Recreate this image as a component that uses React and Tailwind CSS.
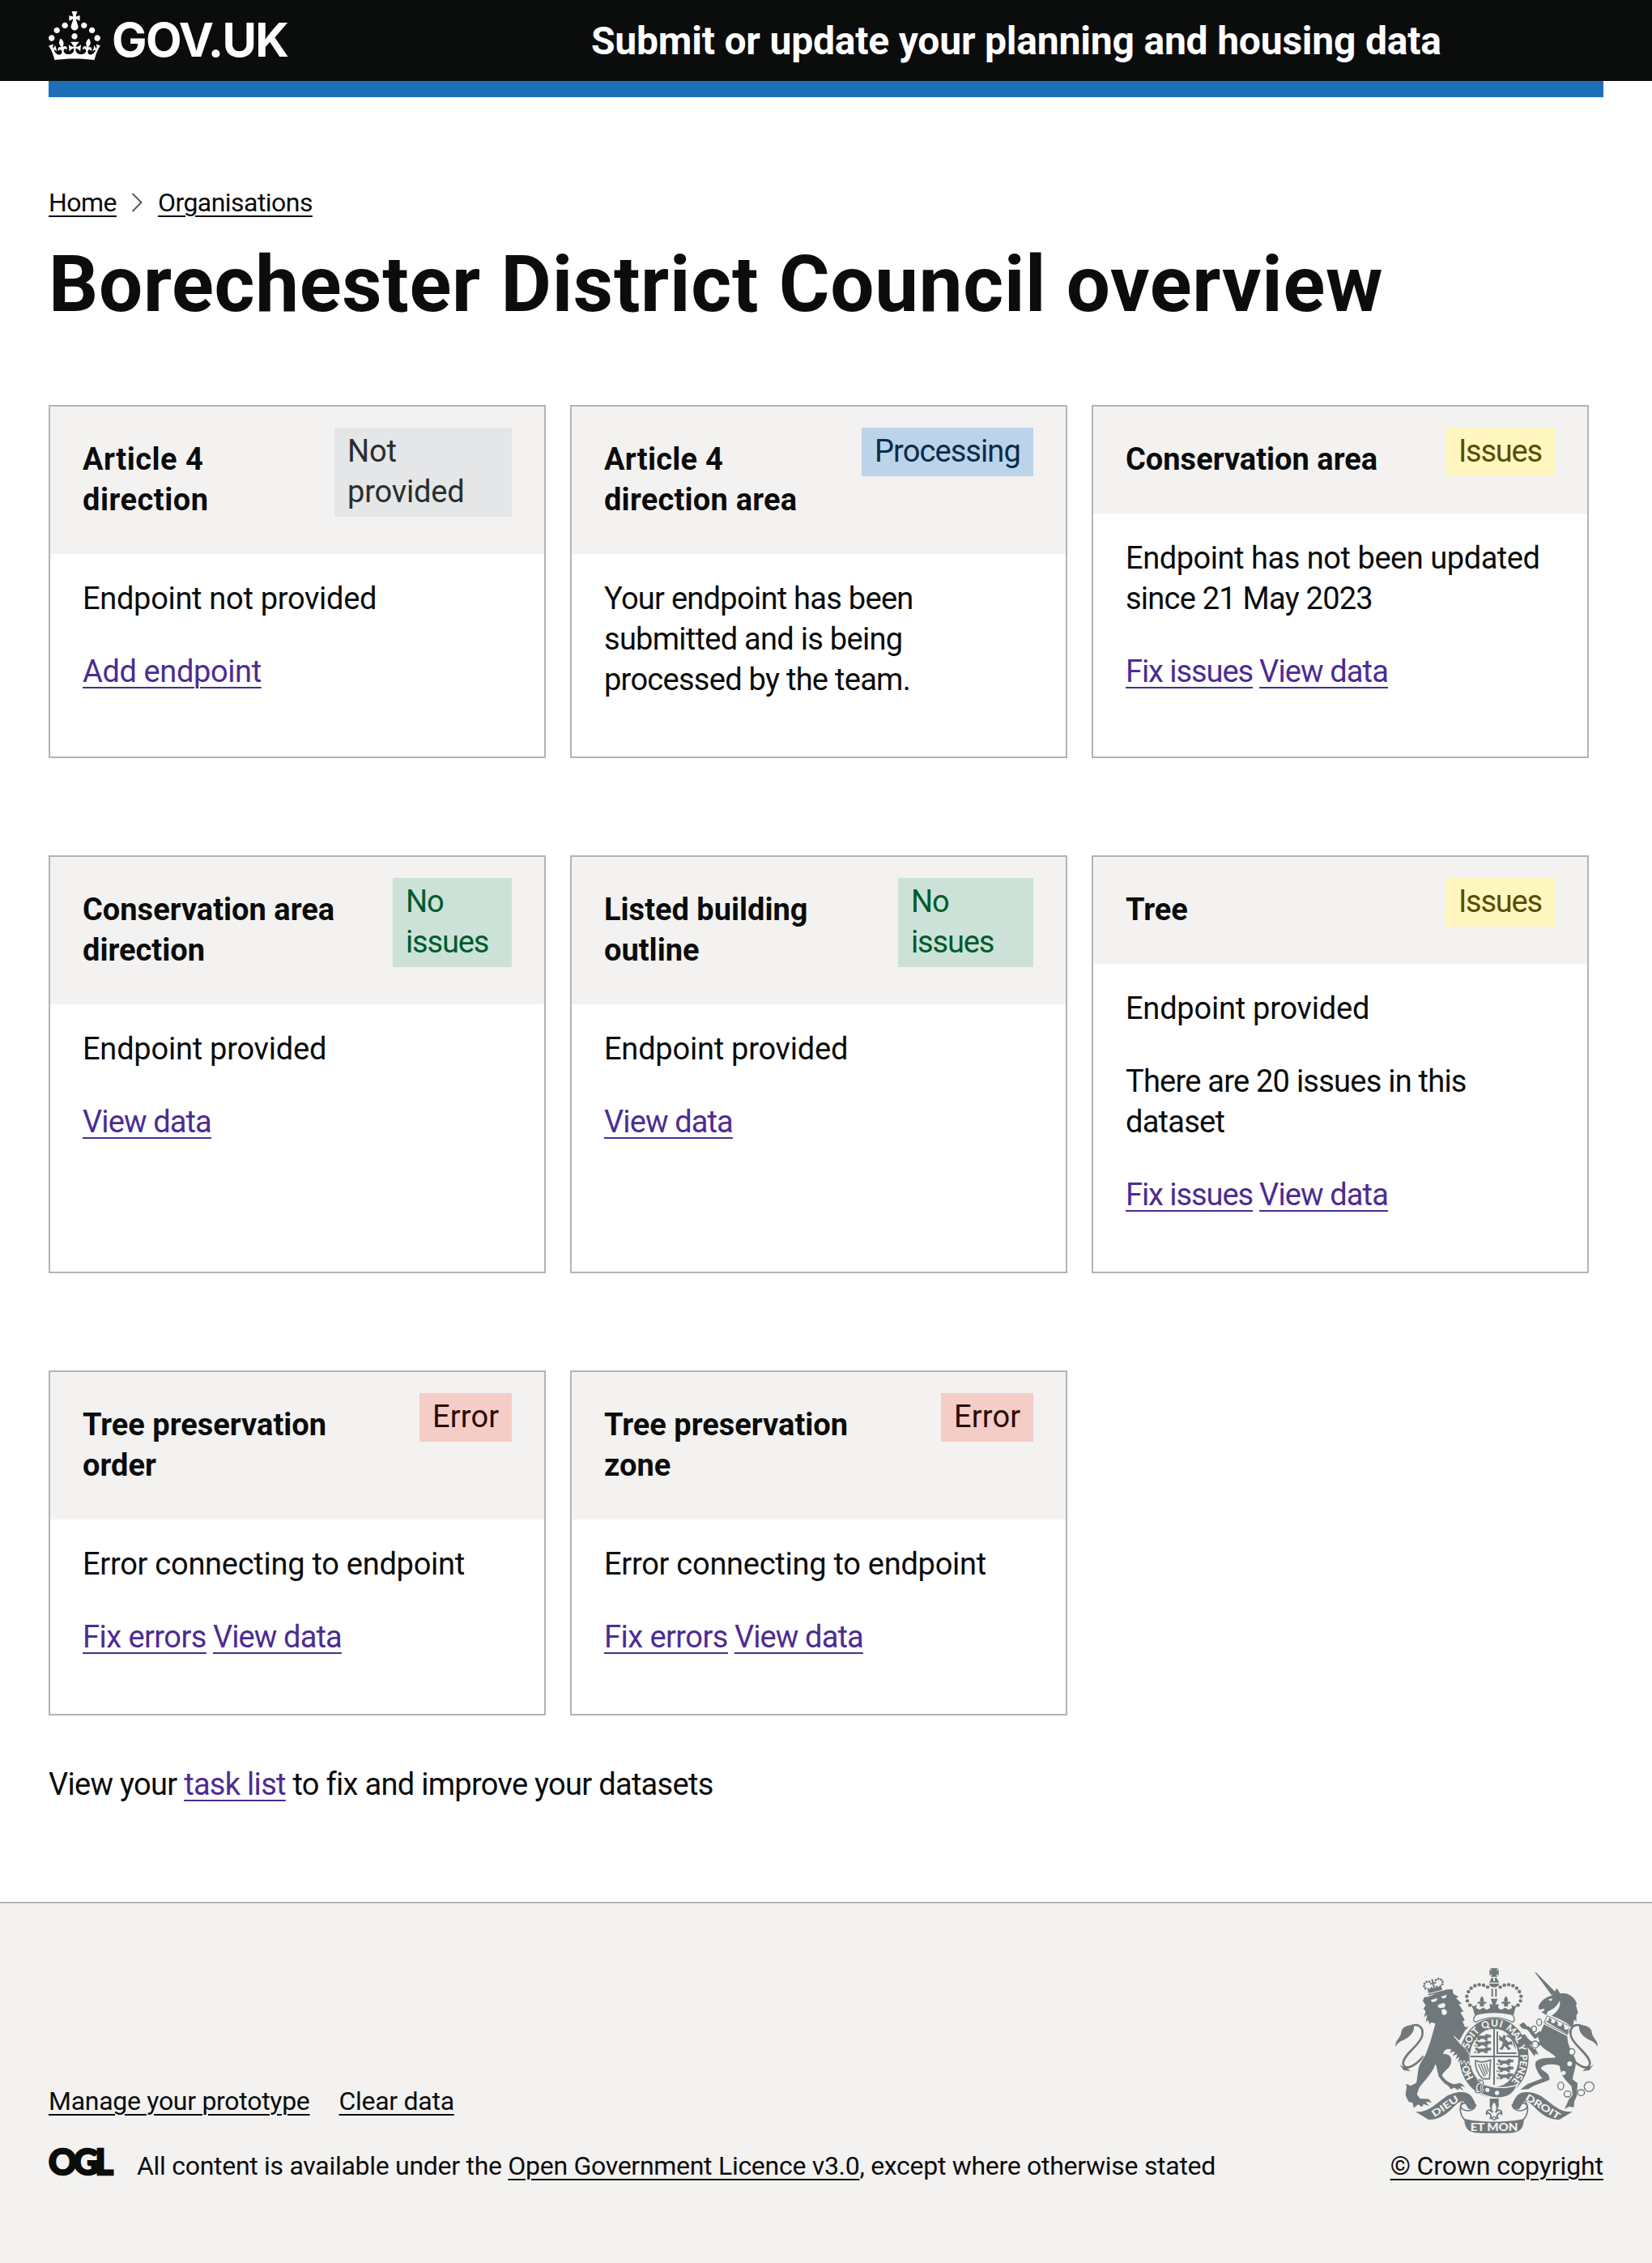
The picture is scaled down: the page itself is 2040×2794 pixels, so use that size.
import React from "react";

const LINK = "underline decoration-2 underline-offset-[6px] text-[#4c2c92]";
const SMALL_LINK = "underline decoration-2 underline-offset-[5px] whitespace-nowrap";

const TAGS = {
  grey: "bg-[#e5e6e7] text-[#282d30]",
  blue: "bg-[#bbd4ea] text-[#0c2d4a]",
  yellow: "bg-[#fff7bf] text-[#594d00]",
  green: "bg-[#cce2d8] text-[#005a30]",
  red: "bg-[#f4cdc6] text-[#2a0b06]",
};

const TRACKING = {
  "Endpoint not provided": "tracking-[-0.008em]",
  "Your endpoint has been\nsubmitted and is being\nprocessed by the team.": "tracking-[-0.019em]",
  "Endpoint has not been updated": "tracking-[-0.012em]",
  "since 21 May 2023": "tracking-[-0.020em]",
  "Endpoint provided": "tracking-[-0.006em]",
  "There are 20 issues in this\ndataset": "tracking-[-0.020em]",
  "Error connecting to endpoint": "tracking-[-0.007em]",
  "Add endpoint": "tracking-[-0.010em]",
  "View data": "tracking-[-0.023em]",
  "Fix issues": "tracking-[-0.028em]",
  "Fix errors": "tracking-[-0.014em]",
  "Article 4\ndirection": "tracking-[0.013em]",
  "Article 4\ndirection area": "tracking-[0.006em]",
  "Not\nprovided": "tracking-[-0.005em]",
  "No\nissues": "tracking-[-0.030em]",
  Issues: "tracking-[-0.033em]",
  Processing: "tracking-[-0.024em]",
  Error: "tracking-[0.004em]",
};

const CARDS = [
  { title: "Article 4\ndirection", tag: "Not\nprovided", tone: "grey", tagWidth: "w-[219px]", body: ["Endpoint not provided"], links: ["Add endpoint"] },
  { title: "Article 4\ndirection area", tag: "Processing", tone: "blue", tagWidth: "w-[212px]", body: ["Your endpoint has been\nsubmitted and is being\nprocessed by the team."], links: [] },
  { title: "Conservation area", tag: "Issues", tone: "yellow", tagWidth: "w-[135px]", body: [["Endpoint has not been updated", "since 21 May 2023"]], links: ["Fix issues", "View data"] },
  { title: "Conservation area\ndirection", tag: "No\nissues", tone: "green", tagWidth: "w-[147px]", body: ["Endpoint provided"], links: ["View data"] },
  { title: "Listed building\noutline", tag: "No\nissues", tone: "green", tagWidth: "w-[167px]", body: ["Endpoint provided"], links: ["View data"] },
  { title: "Tree", tag: "Issues", tone: "yellow", tagWidth: "w-[135px]", body: ["Endpoint provided", "There are 20 issues in this\ndataset"], links: ["Fix issues", "View data"] },
  { title: "Tree preservation\norder", tag: "Error", tone: "red", tagWidth: "w-[114px]", body: ["Error connecting to endpoint"], links: ["Fix errors", "View data"] },
  { title: "Tree preservation\nzone", tag: "Error", tone: "red", tagWidth: "w-[114px]", body: ["Error connecting to endpoint"], links: ["Fix errors", "View data"] },
];

function Crown() {
  return (
    <svg viewBox="0 0 32 30" className="h-[60px] w-16 shrink-0" fill="currentColor" aria-hidden="true">
      <path d="M22.6 10.4c-1 .4-2-.1-2.4-1-.4-.9.1-2 1-2.4.9-.4 2 .1 2.4 1s-.1 2-1 2.4m-5.9 6.7c-.9.4-2-.1-2.4-1-.4-.9.1-2 1-2.4.9-.4 2 .1 2.4 1s-.1 2-1 2.4m10.8-3.7c-1 .4-2-.1-2.4-1-.4-.9.1-2 1-2.4.9-.4 2 .1 2.4 1s0 2-1 2.4m3.3 4.8c-1 .4-2-.1-2.4-1-.4-.9.1-2 1-2.4.9-.4 2 .1 2.4 1s-.1 2-1 2.4M17 4.7l2.3 1.2V2.5l-2.3.7-.2-.2.9-3h-3.4l.9 3-.2.2c-.1.1-2.3-.7-2.3-.7v3.4L15 4.7c.1.1.1.2.2.2l-1.3 4c-.1.2-.1.4-.1.6 0 1.1.8 2 1.9 2.2h.7c1-.2 1.9-1.1 1.9-2.1 0-.2 0-.4-.1-.6l-1.3-4c-.1-.2 0-.2.1-.3m-7.6 5.7c.9.4 2-.1 2.4-1 .4-.9-.1-2-1-2.4-.9-.4-2 .1-2.4 1s0 2 1 2.4m-5 3c.9.4 2-.1 2.4-1 .4-.9-.1-2-1-2.4-.9-.4-2 .1-2.4 1s.1 2 1 2.4m-3.2 4.8c.9.4 2-.1 2.4-1 .4-.9-.1-2-1-2.4-.9-.4-2 .1-2.4 1s0 2 1 2.4m14.8 11c4.4 0 8.6.3 12.3.8 1.1-4.5 2.4-7 3.7-8.8l-2.5-.9c.2 1.3.3 1.9 0 2.7-.4-.4-.8-1.1-1.1-2.3l-1.2 4c.7-.5 1.3-.8 2-.9-1.1 2.5-2.6 3.1-3.5 3-1.1-.2-1.7-1.2-1.5-2.1.3-1.2 1.5-1.5 2.1-.1 1.1-2.3-.8-3-2-2.3 1.9-1.9 2.1-3.5.6-5.6-2.1 1.6-2.1 3.2-1.2 5.5-1.2-1.4-3.2-.6-2.5 1.6.9-1.4 2.1-.5 1.9.8-.2 1.1-1.7 2.1-3.5 1.9-2.7-.2-2.9-2.1-2.9-3.6.7-.1 1.9.5 2.9 1.9l.4-4.3c-1.1 1.1-2.1 1.4-3.2 1.4.4-1.2 2.1-3 2.1-3h-5.4s1.7 1.9 2.1 3c-1.1 0-2.1-.2-3.2-1.4l.4 4.3c1-1.4 2.2-2 2.9-1.9-.1 1.5-.2 3.4-2.9 3.6-1.9.2-3.4-.8-3.5-1.9-.2-1.3 1-2.2 1.9-.8.7-2.3-1.2-3-2.5-1.6.9-2.2.9-3.9-1.2-5.5-1.5 2-1.3 3.7.6 5.6-1.2-.7-3.1 0-2 2.3.6-1.4 1.8-1.1 2.1.1.2.9-.3 1.9-1.5 2.1-.9.2-2.4-.5-3.5-3 .6 0 1.2.3 2 .9l-1.2-4c-.3 1.1-.7 1.9-1.1 2.3-.3-.8-.2-1.4 0-2.7l-2.9.9C1.3 23 2.6 25.5 3.7 30c3.7-.5 7.9-.8 12.3-.8" />
    </svg>
  );
}

const PEARLS = [[303, 167], [294, 151], [292, 134], [298, 117], [308, 104], [322, 95], [338, 91], [354, 93], [369, 100]];
const LIGHT = "#f3f2f1";

function Fleur({ x, y, s = 1 }) {
  return (
    <g transform={`translate(${x} ${y}) scale(${s})`}>
      <path d="M0 -20C9 -9 8 -2 3 5C8 -3 17 -1 16 8C13 5 9 6 6 12L8 17H-8L-6 12C-9 6 -13 5 -16 8C-17 -1 -8 -3 -3 5C-8 -2 -9 -9 0 -20Z" />
    </g>
  );
}

function Passant({ x, y }) {
  return (
    <path
      transform={`translate(${x} ${y})`}
      stroke="currentColor"
      strokeWidth="2"
      d="M-28 -7L-22 -10L-16 -5H6L12 -11L24 -9L26 -3L20 2L14 4L18 10H9L4 5H-8L-11 10H-21L-17 4L-24 0ZM22 -4L30 -10L29 1ZM-29 4L-24 9H-31Z"
    />
  );
}

function Ribbon() {
  return (
    <>
      <path d="M102 562C150 564 172 536 210 509C240 488 285 482 305 500C315 511 321 522 325 536L320 550L300 553C290 540 288 530 277 522C258 522 240 552 214 570C196 582 176 592 150 591Z" />
      <path d="M276 524C262 545 266 572 284 592M325 534C325 552 300 566 276 552C262 542 272 528 290 530" fill="none" stroke="currentColor" strokeWidth="5" />
    </>
  );
}

function Tail() {
  return (
    <>
      <path d="M28 322C24 298 48 288 49 266C52 248 76 238 96 243C98 262 88 278 68 290C50 300 34 304 28 322Z" />
      <path d="M84 245C112 232 134 248 126 282C116 318 58 348 56 382C58 408 92 402 132 356" fill="none" stroke="currentColor" strokeWidth="8" />
      <path d="M42 386L56 396L68 394L88 398L72 402L84 412L58 408Z" />
    </>
  );
}

function RoyalArms() {
  return (
    <svg viewBox="27 30 750 612" className="h-[204px] w-[250px] text-[#70787b]" fill="currentColor" aria-hidden="true">
      {/* imperial crown */}
      <path d="M379 30H407L400 41L410 34V58L400 51L405 62H381L386 51L376 58V34L386 41ZM375 83L384 66H390V78H396V66H402L412 83ZM374 87H412C410 96 403 101 393 101C383 101 376 96 374 87Z" />
      <path d="M383 106H389V136H383ZM397 106H403V136H397Z" />
      {PEARLS.map(([x, y]) => (
        <g key={`${x}-${y}`}>
          <circle cx={x} cy={y} r="6.6" />
          <circle cx={785 - x} cy={y} r="6.6" />
        </g>
      ))}
      <path d="M305 158L316 172L330 166L326 178L340 184L352 176L366 184L378 178L376 162L388 166L380 143H406L398 166L410 162L408 178L420 184L434 176L446 184L460 178L456 166L470 172L481 158L470 184L466 203C420 193 365 193 321 203L316 184Z" />
      <Fleur x={348} y={154} s={1.05} />
      <Fleur x={437} y={154} s={1.05} />
      <path d="M334 200C372 192 414 192 452 200C470 204 472 226 462 230C420 208 366 208 324 230C312 222 318 204 334 200Z" fill={LIGHT} stroke="currentColor" strokeWidth="4" />

      {/* garter and shield */}
      <ellipse cx="393" cy="362" rx="109" ry="127" fill="none" stroke="currentColor" strokeWidth="38" />
      <path id="garter" d="M393 478A97 116 0 0 1 393 246A97 116 0 0 1 393 478" fill="none" />
      <g fill={LIGHT} className="text-[36px] font-black" fontFamily="Lato, sans-serif">
        <text><textPath href="#garter" startOffset="90" textLength="52">HO</textPath></text>
        <text><textPath href="#garter" startOffset="200" textLength="78">SOIT</textPath></text>
        <text><textPath href="#garter" startOffset="291" textLength="72">QUI</textPath></text>
        <text><textPath href="#garter" startOffset="378" textLength="70">MAL</textPath></text>
        <text><textPath href="#garter" startOffset="455">Y</textPath></text>
        <text><textPath href="#garter" startOffset="490" textLength="108">PENSE</textPath></text>
      </g>
      <path d="M390 254H396V354H484V360H396V462H390V360H302V354H390Z" />
      <path d="M402 264H408V342H476V348H402Z" />
      {[286, 310, 334].map((y) => <Passant key={y} x={351} y={y} />)}
      {[378, 404, 430].map((y) => <Passant key={y} x={434} y={y} />)}
      <path d="M412 278L424 288L428 276L438 282L434 292L446 304L458 300L462 316L452 312L444 318L456 328L446 334L432 318L424 332L412 330L422 318L426 304L412 296ZM440 276C462 282 470 300 474 332L466 318C464 300 456 288 440 284Z" />
      <path d="M324 372C340 380 362 378 380 370L376 440H350C330 418 322 396 324 372Z" fill="none" stroke="currentColor" strokeWidth="5" />
      <path d="M334 384L356 432M344 384L362 428M354 384L368 422M364 382L372 412" fill="none" stroke="currentColor" strokeWidth="4" />
      <path d="M345 455C385 475 430 478 480 462L466 486C440 520 385 515 340 492C322 480 326 458 345 455Z" stroke={LIGHT} strokeWidth="4" />
      <circle cx="368" cy="481" r="8" fill={LIGHT} />
      <circle cx="404" cy="492" r="8" fill={LIGHT} />
      <path d="M330 446C344 440 358 450 352 462C344 466 344 474 350 480C346 494 328 494 322 486" fill="none" stroke={LIGHT} strokeWidth="9" />
      <path d="M330 446C344 440 358 450 352 462C344 466 344 474 350 480C346 494 328 494 322 486" fill="none" stroke="currentColor" strokeWidth="4" />

      {/* lion */}
      <Tail />
      <path stroke={LIGHT} strokeWidth="3" d="M127 150L134 136L150 134L214 108L240 106L243 124L264 136L254 142L276 162L264 164L282 192L270 194L286 222L278 228L286 247L302 245L286 262L274 284L264 300L244 282L272 314L290 330L303 352L304 390L296 374L290 390L282 372L273 387L270 371L256 383L262 361L248 371L255 350L237 359L246 340L226 346L233 332C218 328 208 334 206 346C236 346 244 372 228 396C216 410 204 416 202 428C208 440 228 456 244 458C256 458 264 452 272 456L290 472L270 468L284 486L262 476L264 486L246 474L232 480L224 468C206 458 192 440 186 430L176 388C168 412 146 438 120 468C112 484 108 496 110 500L120 512L152 513L165 530L142 526L156 543L132 535L126 546L112 536L94 550L90 530L76 526C68 512 62 500 64 492L68 470L64 456L84 464L104 454L110 412C112 386 128 368 138 350L156 300L174 236L160 232L154 242L148 224L138 233L143 205L130 216L138 190L130 180L138 168Z" />
      <path d="M158 148L184 141L178 152L164 156ZM196 136L218 128L214 140L202 142ZM186 166L206 158L214 166L208 176L194 178L184 174Z" fill={LIGHT} />
      <path d="M198 186C206 176 220 184 218 196C214 206 202 206 200 198Z" fill={LIGHT} />
      <g transform="rotate(-14 168 95)">
        <path d="M144 118V96L152 104L160 96L166 106V88L158 90V82L166 84V70H172V84L180 82V90L172 88V106L178 96L186 104L196 96V118Z" />
        {[[137, 98], [134, 89], [138, 80], [147, 75], [157, 77], [182, 77], [192, 75], [201, 80], [205, 89], [202, 98]].map(([x, y]) => <circle key={x} cx={x} cy={y} r="4.3" />)}
        <path d="M141 121H200V126H141Z" />
      </g>

      {/* unicorn */}
      <g transform="translate(804 0) scale(-1 1)"><Tail /></g>
      <path d="M543 44L550 47L624 122L606 130Z" />
      <path d="M557 174C564 150 588 136 610 130L625 104L638 124C668 118 690 136 700 162L696 166L704 196L698 204L698 228L690 220L684 252C664 230 636 218 606 206C636 188 640 164 636 150C628 170 610 184 592 190L586 204L568 192L578 188L580 180L560 184Z" />
      <path d="M592 146L610 142L604 152Z" fill={LIGHT} />
      <path d="M590 206L680 248L664 276L578 232Z" fill={LIGHT} stroke="currentColor" strokeWidth="3" />
      <path d="M582 226L594 226L598 212L606 222L604 232L616 234L622 222L630 234L628 242L640 246L648 234L654 248L652 256L664 258L672 248L664 274Z" />
      <path d="M578 238L664 282C666 330 690 344 696 376C696 402 686 420 684 442L702 456L700 502L690 524L688 546L672 542L654 552L670 516L684 500L680 468C660 446 640 430 636 392C612 382 572 386 566 402C582 416 600 420 598 444L540 466L520 478L490 480L516 460L572 438C556 420 540 392 548 376C570 356 602 366 622 360C604 340 580 334 568 318L556 288Z" />
      <path d="M566 268L545 284L522 254C516 250 508 250 498 246M566 308C544 320 520 308 504 282C496 290 508 306 520 318L546 344" fill="none" stroke="currentColor" strokeWidth="13" strokeLinejoin="round" />
      <path d="M486 240L502 230L512 240L508 254L496 252ZM524 330L548 330L558 352L546 346L544 356L536 348Z" />
      <g fill="none" stroke="currentColor" strokeWidth="4">
        <ellipse cx="560" cy="230" rx="9" ry="12" fill={LIGHT} />
        <ellipse cx="541" cy="255" rx="9" ry="11" fill={LIGHT} />
        <ellipse cx="545" cy="313" rx="12" ry="13" fill={LIGHT} />
        <ellipse cx="681" cy="340" rx="11" ry="12" fill={LIGHT} />
        <ellipse cx="640" cy="466" rx="11" ry="14" />
        <ellipse cx="665" cy="496" rx="13" ry="11" />
        <ellipse cx="715" cy="491" rx="13" ry="11" />
        <circle cx="745" cy="469" r="18" />
      </g>
      <g fill={LIGHT}>
        <circle cx="673" cy="384" r="9" />
        <circle cx="650" cy="418" r="8" />
      </g>

      {/* motto ribbon */}
      <Ribbon />
      <g transform="translate(785 0) scale(-1 1)"><Ribbon /></g>
      <path d="M282 588C340 602 446 602 504 588L502 604C497 628 486 641 440 641H346C300 641 290 628 284 604Z" />
      <path d="M377 513H410V545H377Z" />
      <g fill={LIGHT} stroke="currentColor" strokeWidth="3.2"><Fleur x={393} y={556} s={1.75} /></g>
      <circle cx="393" cy="586" r="6" fill={LIGHT} stroke="currentColor" strokeWidth="4" />
      <g fill={LIGHT} className="text-[42px] font-black" fontFamily="Lato, sans-serif">
        <text x="305" y="633" textLength="176" lengthAdjust="spacingAndGlyphs">ET MON</text>
        <text transform="translate(172 583) rotate(-34)" className="text-[35px]" textLength="112" lengthAdjust="spacingAndGlyphs">DIEU</text>
        <text transform="translate(506 515) rotate(32)" className="text-[35px]" textLength="144" lengthAdjust="spacingAndGlyphs">DROIT</text>
      </g>
    </svg>
  );
}

function Card({ card }) {
  return (
    <section className="border-2 border-[#b1b4b6]">
      <header className="flex items-start justify-between bg-[#f3f2f1] px-10">
        <h2 className={`whitespace-pre pt-10 pb-[42px] font-bold ${TRACKING[card.title] ?? "tracking-normal"}`}>{card.title}</h2>
        <strong className={`mt-[26px] whitespace-pre px-4 pt-1 pb-1.5 font-normal ${card.tagWidth} ${TAGS[card.tone]} ${TRACKING[card.tag]}`}>{card.tag}</strong>
      </header>
      <div className="flex flex-col gap-10 px-10 pt-[30px] pb-[70px]">
        {card.body.map((text) => (
          <p key={text} className="whitespace-pre">
            {[].concat(text).map((part) => <span key={part} className={`block ${TRACKING[part]}`}>{part}</span>)}
          </p>
        ))}
        {card.links.length > 0 && (
          <p className="flex gap-2">
            {card.links.map((text) => <a key={text} className={`${LINK} ${TRACKING[text]}`}>{text}</a>)}
          </p>
        )}
      </div>
    </section>
  );
}

export default function App() {
  return (
    <div className="flex min-h-[2794px] w-[2040px] flex-col bg-white font-['Roboto','Liberation_Sans',sans-serif] text-[38px] leading-[50px] text-[#0b0c0c]">
      <header className="h-[120px]">
        <div className="flex h-[100px] items-start bg-[#0b0c0c] px-[60px] text-white">
          <div className="flex w-[670px] gap-[14px] pt-[14px]">
            <Crown />
            <span className="font-['Inter',sans-serif] text-[58px] leading-[70px] font-bold tracking-[-0.028em]">GOV.UK</span>
          </div>
          <span className="pt-[21px] text-[48px] leading-[60px] font-bold tracking-[-0.0042em]">Submit or update your planning and housing data</span>
        </div>
        <div className="mx-[60px] h-5 bg-[#1d70b8]" />
      </header>

      <main className="px-[60px] pt-[110px]">
        <nav className="flex h-10 items-center text-[32px] leading-10 tracking-[-0.017em]">
          <a className={SMALL_LINK}>Home</a>
          <svg viewBox="0 0 14 24" className="mr-[19px] ml-[18px] h-6 w-[14px]" fill="none" stroke="#505a5f" strokeWidth="2">
            <path d="M1.5 1L12.5 12L1.5 23" />
          </svg>
          <a className={SMALL_LINK}>Organisations</a>
        </nav>
        <h1 className="mt-[31px] text-[96px] leading-[100px] font-bold tracking-[0.0076em] whitespace-nowrap">Borechester District Council overview</h1>
        <div className="mt-[99px] grid grid-cols-[614px_614px_614px] gap-x-[30px] gap-y-[120px]">
          {CARDS.map((card) => <Card key={card.title} card={card} />)}
        </div>
        <p className="mt-[60px] tracking-[-0.0185em]">View your <a className={LINK}>task list</a> to fix and improve your datasets</p>
      </main>

      <footer className="mt-[120px] flex flex-1 justify-between border-t-2 border-[#b1b4b6] bg-[#f3f2f1] px-[60px] pt-20 text-[32px] leading-10 tracking-[-0.009em]">
        <div className="flex flex-col gap-10 pt-36">
          <div className="flex gap-9">
            <a className={SMALL_LINK}>Manage your prototype</a>
            <a className={SMALL_LINK}>Clear data</a>
          </div>
          <div className="flex">
            <span className="-mt-[2px] w-[109px] font-['Lato',sans-serif] text-[43px] leading-[34px] font-black tracking-[-0.1em] [-webkit-text-stroke:2.4px_#0b0c0c]">OGL</span>
            <span className="whitespace-nowrap">All content is available under the <a className={SMALL_LINK}>Open Government Licence v3.0</a>, except where otherwise stated</span>
          </div>
        </div>
        <div className="flex flex-col items-start gap-5">
          <div className="pl-[6px]"><RoyalArms /></div>
          <a className={`${SMALL_LINK} tracking-[-0.003em]`}>© Crown copyright</a>
        </div>
      </footer>
    </div>
  );
}
